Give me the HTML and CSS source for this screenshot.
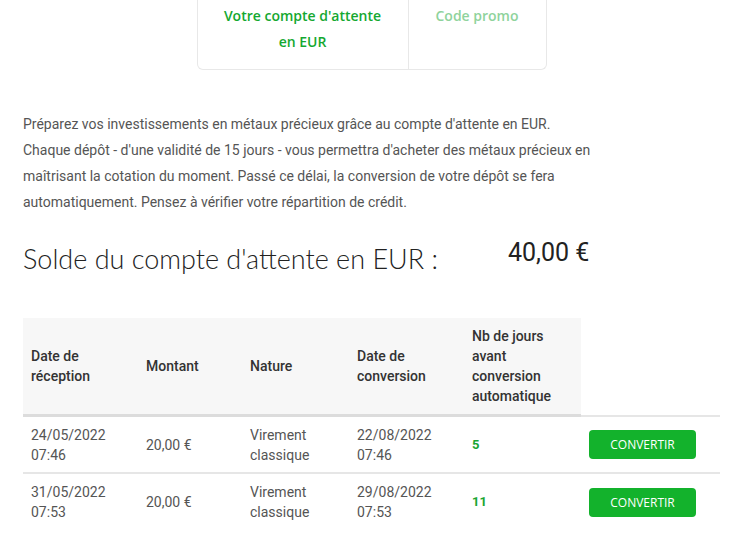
FILE: index.html
```html
<!doctype html>
<html lang="fr">
<head>
<meta charset="utf-8">
<meta name="viewport" content="width=device-width, initial-scale=1">
<title>Compte d'attente en EUR</title>
<link rel="stylesheet" href="styles.css">
</head>
<body>

	<div class="tabs">
		<a class="tab tabActive" href="#">Votre compte d'attente<br>en EUR</a>
		<a class="tab" href="#">Code promo</a>
	</div>

	<div class="content">

		<p class="intro">
			Préparez vos investissements en métaux précieux grâce au compte d'attente en EUR.<br>
			Chaque dépôt - d'une validité de 15 jours - vous permettra d'acheter des métaux précieux en
			maîtrisant la cotation du moment. Passé ce délai, la conversion de votre dépôt se fera
			automatiquement. Pensez à vérifier votre répartition de crédit.
		</p>

		<div class="balance">
			<h2>Solde du compte d'attente en EUR :</h2>
			<span class="amount">40,00 €</span>
		</div>

		<table class="deposits">
			<thead>
				<tr>
					<th class="c1">Date de<br>réception</th>
					<th class="c2">Montant</th>
					<th class="c3">Nature</th>
					<th class="c4">Date de<br>conversion</th>
					<th class="c5">Nb de jours<br>avant<br>conversion<br>automatique</th>
					<th class="c6"></th>
				</tr>
			</thead>
			<tbody>
				<tr>
					<td>24/05/2022<br>07:46</td>
					<td>20,00 €</td>
					<td>Virement<br>classique</td>
					<td>22/08/2022<br>07:46</td>
					<td class="days">5</td>
					<td><button>Convertir</button></td>
				</tr>
				<tr>
					<td>31/05/2022<br>07:53</td>
					<td>20,00 €</td>
					<td>Virement<br>classique</td>
					<td>29/08/2022<br>07:53</td>
					<td class="days">11</td>
					<td><button>Convertir</button></td>
				</tr>
			</tbody>
		</table>

	</div>

</body>
</html>
```

FILE: styles.css
```css
	body { font: 14px "Roboto", sans-serif; color: #555; margin: 0; background: #fff; }

	.tabs { display: flex; width: 350px; margin: 0 auto; border: 1px solid #e8e8e8; border-top: none; border-radius: 0 0 6px 6px; box-sizing: border-box; }
	.tab { font: 600 14px/26px "Open Sans", sans-serif; color: #8fd39c; text-align: center; text-decoration: none; padding: 3px 0 14px; }
	.tabActive { width: 210px; color: #14a830; border-right: 1px solid #e8e8e8; }
	.tab + .tab { flex: 1; }

	.content { padding: 0 23px; }

	.intro { margin: 41px 0 0; line-height: 26px; max-width: 600px; }

	.balance { display: flex; align-items: flex-start; margin-top: 24px; }
	.balance h2 { font: 300 27px/40px "Lato", sans-serif; color: #222; margin: 0; width: 485px; }
	.amount { font: 25px/28px "Roboto", sans-serif; color: #222; }

	.deposits { border-collapse: collapse; width: 697px; margin-top: 39px; table-layout: fixed; }
	.deposits th { background: #f7f7f7; color: #333; font-weight: 500; text-align: left; line-height: 20px; padding: 8px 8px; vertical-align: middle; border-bottom: 3px solid #dcdcdc; }
	.deposits th.c6 { background: #fff; border-bottom: 2px solid #e6e6e6; }
	.deposits td { line-height: 20px; padding: 8px 8px 7px; border-bottom: 2px solid #e6e6e6; vertical-align: middle; }
	.deposits tbody tr:last-child td { border-bottom: none; }

	.c1 { width: 99px; }
	.c2 { width: 88px; }
	.c3 { width: 91px; }
	.c4 { width: 99px; }
	.c5 { width: 101px; }

	.days { color: #1aa532; font-weight: 700; font-size: 13px; }

	button { background: #13b22c; color: #fff; border: none; border-radius: 4px; font: 500 12px "Open Sans", sans-serif; text-transform: uppercase; width: 107px; height: 29px; cursor: pointer; }
```
